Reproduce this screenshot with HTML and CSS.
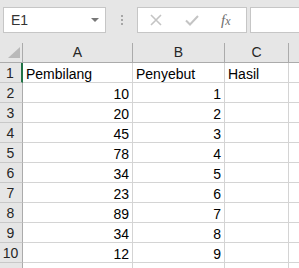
FILE: index.html
```html
<!DOCTYPE html>
<html lang="en">
<head>
    <meta charset="UTF-8">
    <title>Sheet</title>
    <link rel="stylesheet" href="styles.css">
</head>
<body>
    <div class="toolbar">
        <div class="name-box">
            <span>E1</span>
            <span class="caret"></span>
        </div>
        <div class="grip"><i></i><i></i><i></i></div>
        <div class="fx-box">
            <svg class="btn-cancel" width="12" height="12" viewBox="0 0 12 12">
                <path d="M1 1 L11 11 M11 1 L1 11" stroke="#c4c4c4" stroke-width="1.6" fill="none"/>
            </svg>
            <svg class="btn-enter" width="14" height="11" viewBox="0 0 14 11">
                <path d="M1 5.5 L5 9.5 L13 1" stroke="#c4c4c4" stroke-width="2" fill="none"/>
            </svg>
            <span class="fx">f<small>x</small></span>
        </div>
        <div class="formula-input"></div>
    </div>

    <div class="sheet">
        <div class="corner"><span class="tri"></span></div>
        <div class="col-head">A</div>
        <div class="col-head">B</div>
        <div class="col-head">C</div>
        <div class="col-head last"></div>

        <div class="row-head active">1</div>
        <div class="cell">Pembilang</div>
        <div class="cell">Penyebut</div>
        <div class="cell">Hasil</div>
        <div class="cell last"></div>

        <div class="row-head">2</div><div class="cell num">10</div><div class="cell num">1</div><div class="cell"></div><div class="cell last"></div>
        <div class="row-head">3</div><div class="cell num">20</div><div class="cell num">2</div><div class="cell"></div><div class="cell last"></div>
        <div class="row-head">4</div><div class="cell num">45</div><div class="cell num">3</div><div class="cell"></div><div class="cell last"></div>
        <div class="row-head">5</div><div class="cell num">78</div><div class="cell num">4</div><div class="cell"></div><div class="cell last"></div>
        <div class="row-head">6</div><div class="cell num">34</div><div class="cell num">5</div><div class="cell"></div><div class="cell last"></div>
        <div class="row-head">7</div><div class="cell num">23</div><div class="cell num">6</div><div class="cell"></div><div class="cell last"></div>
        <div class="row-head">8</div><div class="cell num">89</div><div class="cell num">7</div><div class="cell"></div><div class="cell last"></div>
        <div class="row-head">9</div><div class="cell num">34</div><div class="cell num">8</div><div class="cell"></div><div class="cell last"></div>
        <div class="row-head">10</div><div class="cell num">12</div><div class="cell num">9</div><div class="cell"></div><div class="cell last"></div>
        <div class="row-head"></div><div class="cell"></div><div class="cell"></div><div class="cell"></div><div class="cell last"></div>
    </div>
</body>
</html>
```

FILE: styles.css
```css
html, body {
    height: 268px;
    overflow: hidden;
}
body {
    margin: 0;
    font-family: 'Liberation Sans', Arial, sans-serif;
    font-size: 14px;
    color: #000;
    background-color: #fff;
}
.toolbar {
    display: flex;
    align-items: flex-start;
    height: 43px;
    box-sizing: border-box;
    padding: 7px 0 0 3px;
    background-color: #e6e6e6;
}
.name-box {
    display: flex;
    align-items: center;
    justify-content: space-between;
    width: 103px;
    height: 26px;
    box-sizing: border-box;
    padding: 0 6px 0 7px;
    background-color: #fff;
    border: 1px solid #c6c6c6;
    color: #333;
}
.caret {
    width: 0;
    height: 0;
    border-left: 4px solid transparent;
    border-right: 4px solid transparent;
    border-top: 4px solid #777;
}
.grip {
    display: flex;
    flex-direction: column;
    gap: 2px;
    width: 2px;
    margin: 8px 14px 0 15px;
}
.grip i {
    display: block;
    width: 2px;
    height: 2px;
    background-color: #a6a6a6;
}
.fx-box {
    display: flex;
    align-items: center;
    width: 110px;
    height: 26px;
    box-sizing: border-box;
    padding-left: 12px;
    background-color: #fff;
    border: 1px solid #c6c6c6;
}
.btn-enter {
    margin-left: 23px;
}
.fx {
    margin-left: 22px;
    font-family: 'Liberation Serif', 'Times New Roman', serif;
    font-style: italic;
    font-size: 15px;
    color: #6e6e6e;
}
.fx small {
    font-size: 12px;
}
.formula-input {
    flex: 1;
    height: 26px;
    box-sizing: border-box;
    margin-left: 3px;
    background-color: #fff;
    border: 1px solid #c6c6c6;
    border-right: none;
}
.sheet {
    display: grid;
    grid-template-columns: 23px 110px 92px 64px 1fr;
    grid-auto-rows: 20px;
}
.sheet > div {
    box-sizing: border-box;
    border-right: 1px solid #d4d4d4;
    border-bottom: 1px solid #d4d4d4;
    line-height: 20px;
    white-space: nowrap;
    overflow: hidden;
}
.sheet > div.last {
    border-right: none;
}
.corner {
    display: flex;
    align-items: flex-end;
    justify-content: flex-end;
    padding: 0 2px 4px 0;
    background-color: #e6e6e6;
    border-right-color: #ababab !important;
    border-bottom-color: #ababab !important;
}
.tri {
    width: 0;
    height: 0;
    border-left: 12px solid transparent;
    border-bottom: 11px solid #b9b9b9;
}
.sheet > .col-head {
    background-color: #e6e6e6;
    border-right-color: #ababab;
    border-bottom-color: #ababab;
    text-align: center;
    color: #262626;
    line-height: 19px;
}
.sheet > .row-head {
    background-color: #e6e6e6;
    border-right-color: #ababab;
    border-bottom-color: #c8c8c8;
    text-align: center;
    color: #262626;
    padding-right: 1px;
}
.sheet > .row-head.active {
    border-right: 2px solid #217346;
}
.cell {
    padding: 1px 3px 0 3px;
}
.cell.num {
    text-align: right;
}
```
